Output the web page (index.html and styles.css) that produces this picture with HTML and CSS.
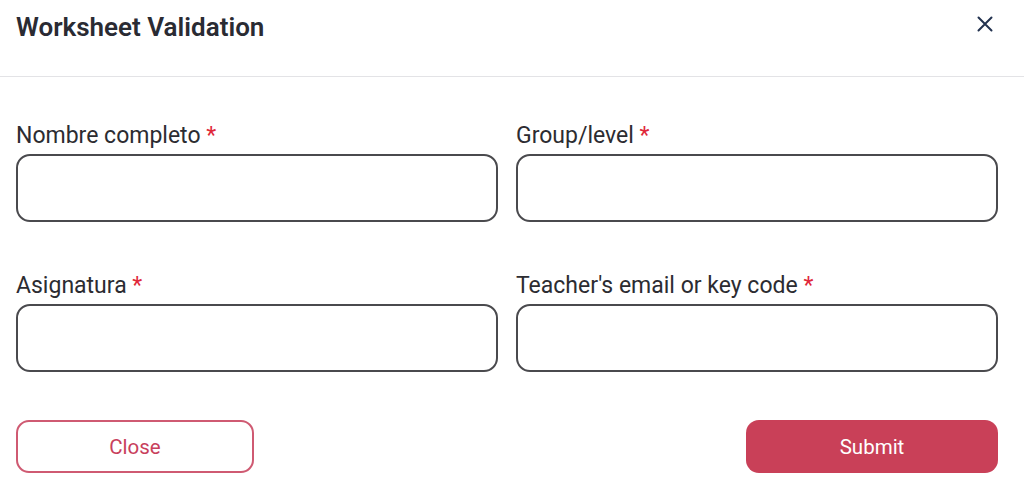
FILE: index.html
```html
<!DOCTYPE html>
<html lang="en">
<head>
<meta charset="utf-8">
<title>Worksheet Validation</title>
<link rel="stylesheet" href="styles.css">
</head>
<body>
<div class="modal">
  <header class="modal-header">
    <h1 class="modal-title">Worksheet Validation</h1>
    <button class="close-x" aria-label="Close">
      <svg width="16" height="16" viewBox="0 0 16 16"><path d="M1.5 1.5 L14.5 14.5 M14.5 1.5 L1.5 14.5" stroke="#22324f" stroke-width="2" stroke-linecap="round" fill="none"/></svg>
    </button>
  </header>
  <form class="modal-body">
    <div class="grid">
      <div class="field">
        <label class="label">Nombre completo <span class="req">*</span></label>
        <input class="input" type="text">
      </div>
      <div class="field">
        <label class="label">Group/level <span class="req">*</span></label>
        <input class="input" type="text">
      </div>
      <div class="field">
        <label class="label">Asignatura <span class="req">*</span></label>
        <input class="input" type="text">
      </div>
      <div class="field">
        <label class="label">Teacher's email or key code <span class="req">*</span></label>
        <input class="input" type="text">
      </div>
    </div>
    <div class="actions">
      <button type="button" class="btn btn-outline">Close</button>
      <button type="button" class="btn btn-primary">Submit</button>
    </div>
  </form>
</div>
</body>
</html>
```
FILE: styles.css
```css
* { box-sizing: border-box; }
html, body { margin: 0; padding: 0; background: #fff; }
body { font-family: Roboto, "Liberation Sans", sans-serif; color: #2a2a30; }
.modal { width: 1024px; }
.modal-header {
  height: 77px;
  border-bottom: 1px solid #e3e3e6;
  display: flex;
  align-items: flex-start;
  justify-content: space-between;
  padding: 12px 31px 0 16px;
}
.modal-title {
  margin: 0;
  font-size: 26px;
  line-height: 30px;
  font-weight: 600;
  color: #2a2b33;
}
.close-x {
  border: 0;
  background: none;
  padding: 0;
  margin-top: 4px;
  width: 16px;
  height: 16px;
  cursor: pointer;
}
.close-x svg { display: block; }
.modal-body { padding: 45px 26px 0 16px; }
.grid {
  display: grid;
  grid-template-columns: 1fr 1fr;
  column-gap: 18px;
  row-gap: 50px;
}
.field { display: flex; flex-direction: column; gap: 5px; }
.label {
  font-size: 23px;
  line-height: 27px;
  color: #2c2c31;
}
.req { color: #e0283a; }
.input {
  height: 68px;
  border: 2px solid #4a4a4e;
  border-radius: 14px;
  background: #fff;
  font: inherit;
  padding: 0 16px;
  outline: none;
}
.actions {
  display: flex;
  justify-content: space-between;
  margin-top: 48px;
}
.btn {
  height: 53px;
  border-radius: 13px;
  font-family: Roboto, "Liberation Sans", sans-serif;
  font-size: 20.5px;
  cursor: pointer;
}
.btn-outline {
  width: 238px;
  background: #fff;
  border: 2px solid #cf5a72;
  color: #c8405c;
}
.btn-primary {
  width: 252px;
  background: #c94058;
  border: 0;
  color: #fff;
}
```
